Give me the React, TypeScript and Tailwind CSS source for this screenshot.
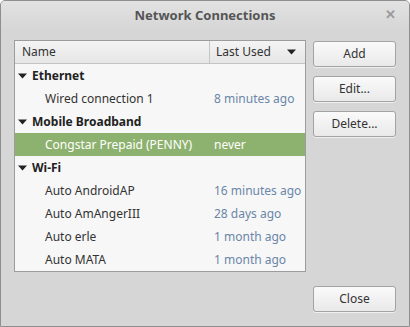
import React from "react";

type Row = { name: string; used?: string; group?: boolean; selected?: boolean };

const rows: Row[] = [
  { name: "Ethernet", group: true },
  { name: "Wired connection 1", used: "8 minutes ago" },
  { name: "Mobile Broadband", group: true },
  { name: "Congstar Prepaid (PENNY)", used: "never", selected: true },
  { name: "Wi-Fi", group: true },
  { name: "Auto AndroidAP", used: "16 minutes ago" },
  { name: "Auto AmAngerIII", used: "28 days ago" },
  { name: "Auto erle", used: "1 month ago" },
  { name: "Auto MATA", used: "1 month ago" },
];

const Arrow = () => (
  <svg width="9" height="6" viewBox="0 0 9 6" className="shrink-0">
    <path d="M0 0.5 H9 L4.5 5.5 Z" fill="#222" />
  </svg>
);

const DialogButton = ({ label }: { label: string }) => (
  <button className="h-[26px] w-[83px] rounded-[3px] border border-[#a3a3a3] bg-gradient-to-b from-[#fafafa] to-[#e9e9e9] text-[12px] text-[#333] shadow-[0_1px_0_rgba(255,255,255,0.6)]">
    {label}
  </button>
);

export default function App() {
  return (
    <div
      className="flex h-[327px] w-[410px] flex-col overflow-hidden rounded-t-[5px] border border-[#8e8e8e] bg-[#d6d6d6] text-[12px] text-[#333]"
      style={{ fontFamily: '"Noto Sans", "Open Sans", sans-serif' }}
    >
      {/* title bar */}
      <div className="relative flex h-[29px] shrink-0 items-center justify-center bg-gradient-to-b from-[#e2e2e2] to-[#d6d6d6]">
        <span className="text-[13px] font-bold text-[#555]">Network Connections</span>
        <span className="absolute right-[13px] top-[4px] text-[13px] font-bold text-[#9a9a9a]">✕</span>
      </div>

      <div className="flex gap-[7px] pl-[13px] pt-[10px]">
        {/* tree */}
        <div className="h-[232px] w-[292px] border border-[#9c9c9c] bg-[#f7f7f7]">
          <div className="flex h-[23px] border-b border-[#c4c4c4] bg-gradient-to-b from-[#f4f4f4] to-[#e6e6e6]">
            <div className="flex w-[195px] items-center border-r border-[#c4c4c4] pl-[7px]">Name</div>
            <div className="flex flex-1 items-center justify-between pl-[6px] pr-[9px]">
              <span>Last Used</span>
              <Arrow />
            </div>
          </div>
          {rows.map((r) => (
            <div
              key={r.name}
              className={`flex h-[23px] items-center whitespace-nowrap ${r.selected ? "bg-[#8db16e] text-white" : ""}`}
            >
              {r.group ? (
                <div className="flex items-center gap-[5px] pl-[3px] font-bold text-[#222]">
                  <Arrow />
                  <span>{r.name}</span>
                </div>
              ) : (
                <>
                  <div className="w-[199px] pl-[30px]">{r.name}</div>
                  <div className={r.selected ? "text-white" : "text-[#6a86a8]"}>{r.used}</div>
                </>
              )}
            </div>
          ))}
        </div>

        {/* buttons */}
        <div className="flex flex-col gap-[9px] pt-[1px]">
          <DialogButton label="Add" />
          <DialogButton label="Edit..." />
          <DialogButton label="Delete..." />
        </div>
      </div>

      <div className="flex justify-end pr-[13px] pt-[14px]">
        <DialogButton label="Close" />
      </div>
    </div>
  );
}
